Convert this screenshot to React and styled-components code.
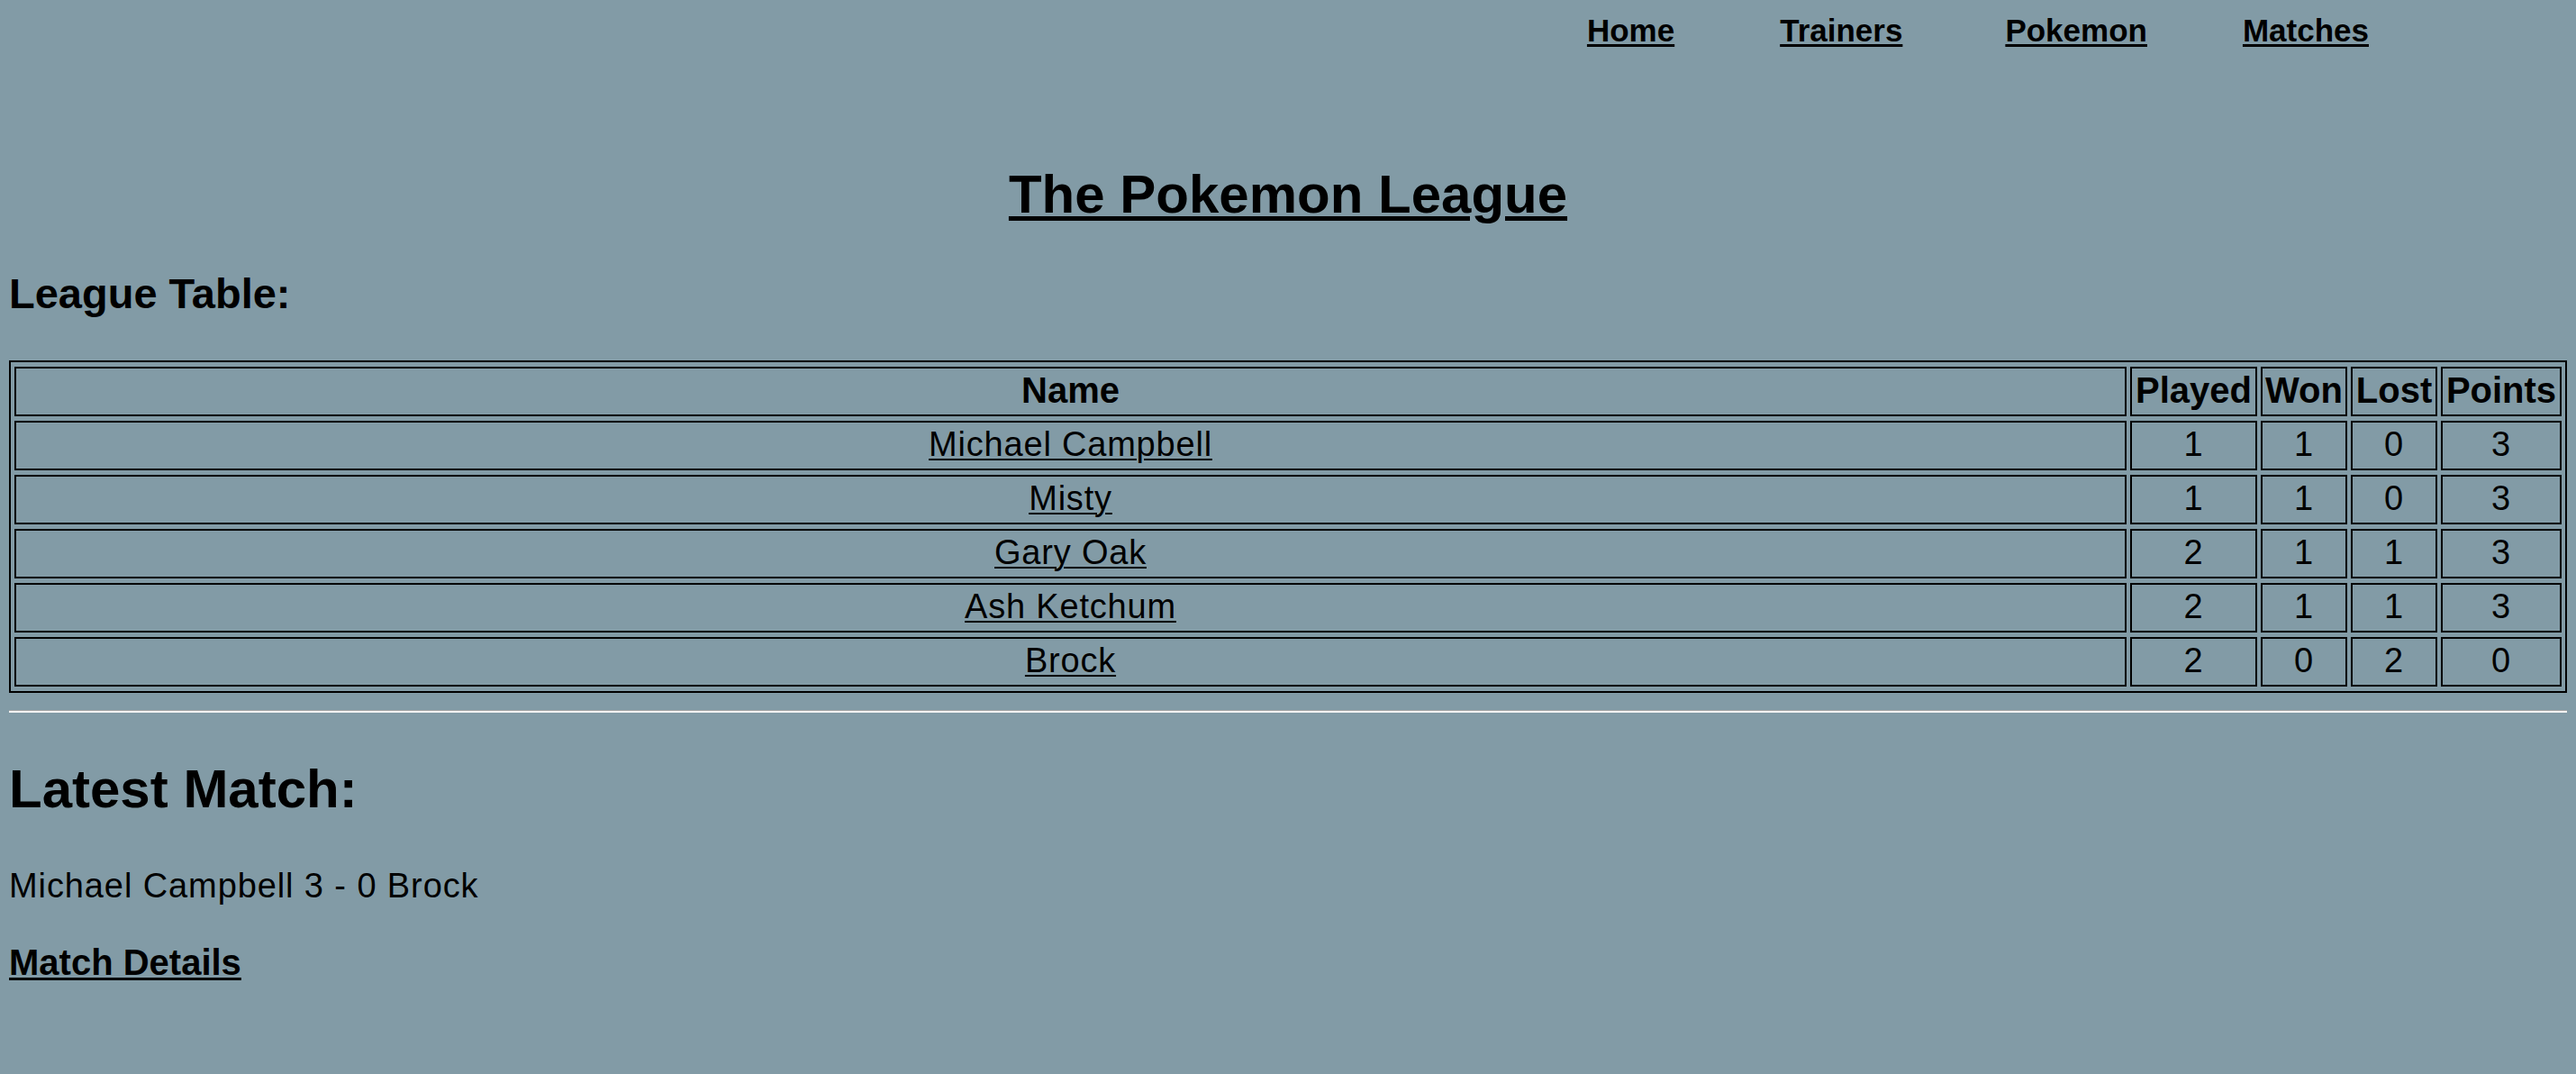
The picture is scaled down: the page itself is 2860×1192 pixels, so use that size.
import React from "react";
import styled, { createGlobalStyle } from "styled-components";

const GlobalStyle = createGlobalStyle`
  html, body {
    margin: 0;
    padding: 0;
    background: #829ba6;
  }
  body {
    padding: 0 10px;
    font-family: "Liberation Sans", Arial, Helvetica, sans-serif;
    color: #000;
  }
`;

const Page = styled.div`
  display: flex;
  flex-direction: column;
`;

const Nav = styled.nav`
  display: flex;
  justify-content: flex-end;
  padding: 14px 220px 0 0;
`;

const NavLink = styled.a`
  margin-left: ${(p) => p.$ml}px;
  font-size: 35px;
  line-height: 40px;
  font-weight: 700;
  color: #000;
  text-decoration: underline;
  text-decoration-thickness: 3px;
  text-underline-offset: 3px;
`;

const Title = styled.h1`
  margin: 127px 0 0;
  text-align: center;
  font-size: 60px;
  line-height: 69px;
  font-weight: 700;
  text-decoration: underline;
  text-decoration-thickness: 5px;
  text-underline-offset: 4px;
`;

const SectionHeading = styled.h2`
  margin: ${(p) => p.$top}px 0 0;
  font-size: ${(p) => p.$size}px;
  line-height: ${(p) => p.$lh}px;
  font-weight: 700;
`;

const Table = styled.table`
  margin-top: 47px;
  width: 100%;
  border: 2px solid #000;
  border-spacing: 4px 5px;
  border-collapse: separate;
  box-sizing: border-box;
`;

const HeadCell = styled.th`
  box-sizing: border-box;
  width: ${(p) => (p.$w ? `${p.$w}px` : "auto")};
  height: 55px;
  border: 2px solid #000;
  padding: 1px 2px 3px;
  font-size: 40px;
  line-height: 47px;
  font-weight: 700;
  text-align: center;
  white-space: nowrap;
`;

const Cell = styled.td`
  box-sizing: border-box;
  height: 55px;
  border: 2px solid #000;
  padding: 1px 2px 3px;
  font-size: 38px;
  line-height: 47px;
  letter-spacing: 0.8px;
  text-align: center;
  white-space: nowrap;
`;

const TrainerLink = styled.a`
  color: #000;
  text-decoration: underline;
  text-decoration-thickness: 2px;
  text-underline-offset: 3px;
`;

const Rule = styled.hr`
  margin: 19px 0 0;
  height: 0;
  border: none;
  border-top: 1px solid #a4a4a4;
  border-bottom: 2px solid #f2f2f2;
`;

const Result = styled.p`
  margin: 51px 0 0;
  font-size: 38px;
  line-height: 44px;
  letter-spacing: 0.9px;
`;

const DetailsLink = styled.a`
  display: block;
  margin-top: 40px;
  font-size: 40px;
  line-height: 46px;
  font-weight: 700;
  color: #000;
  text-decoration: underline;
  text-decoration-thickness: 3px;
  text-underline-offset: 3px;
  align-self: flex-start;
`;

const navItems = [
  { label: "Home", ml: 0 },
  { label: "Trainers", ml: 117 },
  { label: "Pokemon", ml: 114 },
  { label: "Matches", ml: 106 },
];

const rows = [
  { name: "Michael Campbell", played: 1, won: 1, lost: 0, points: 3 },
  { name: "Misty", played: 1, won: 1, lost: 0, points: 3 },
  { name: "Gary Oak", played: 2, won: 1, lost: 1, points: 3 },
  { name: "Ash Ketchum", played: 2, won: 1, lost: 1, points: 3 },
  { name: "Brock", played: 2, won: 0, lost: 2, points: 0 },
];

export default function App() {
  return (
    <Page>
      <GlobalStyle />
      <Nav>
        {navItems.map((n) => (
          <NavLink key={n.label} href="#" $ml={n.ml}>
            {n.label}
          </NavLink>
        ))}
      </Nav>
      <Title>The Pokemon League</Title>
      <SectionHeading $top={49} $size={47} $lh={54}>
        League Table:
      </SectionHeading>
      <Table>
        <thead>
          <tr>
            <HeadCell>Name</HeadCell>
            <HeadCell $w={141}>Played</HeadCell>
            <HeadCell $w={96}>Won</HeadCell>
            <HeadCell $w={96}>Lost</HeadCell>
            <HeadCell $w={134}>Points</HeadCell>
          </tr>
        </thead>
        <tbody>
          {rows.map((r) => (
            <tr key={r.name}>
              <Cell>
                <TrainerLink href="#">{r.name}</TrainerLink>
              </Cell>
              <Cell>{r.played}</Cell>
              <Cell>{r.won}</Cell>
              <Cell>{r.lost}</Cell>
              <Cell>{r.points}</Cell>
            </tr>
          ))}
        </tbody>
      </Table>
      <Rule />
      <SectionHeading $top={50} $size={60} $lh={69}>
        Latest Match:
      </SectionHeading>
      <Result>Michael Campbell 3 - 0 Brock</Result>
      <DetailsLink href="#">Match Details</DetailsLink>
    </Page>
  );
}
